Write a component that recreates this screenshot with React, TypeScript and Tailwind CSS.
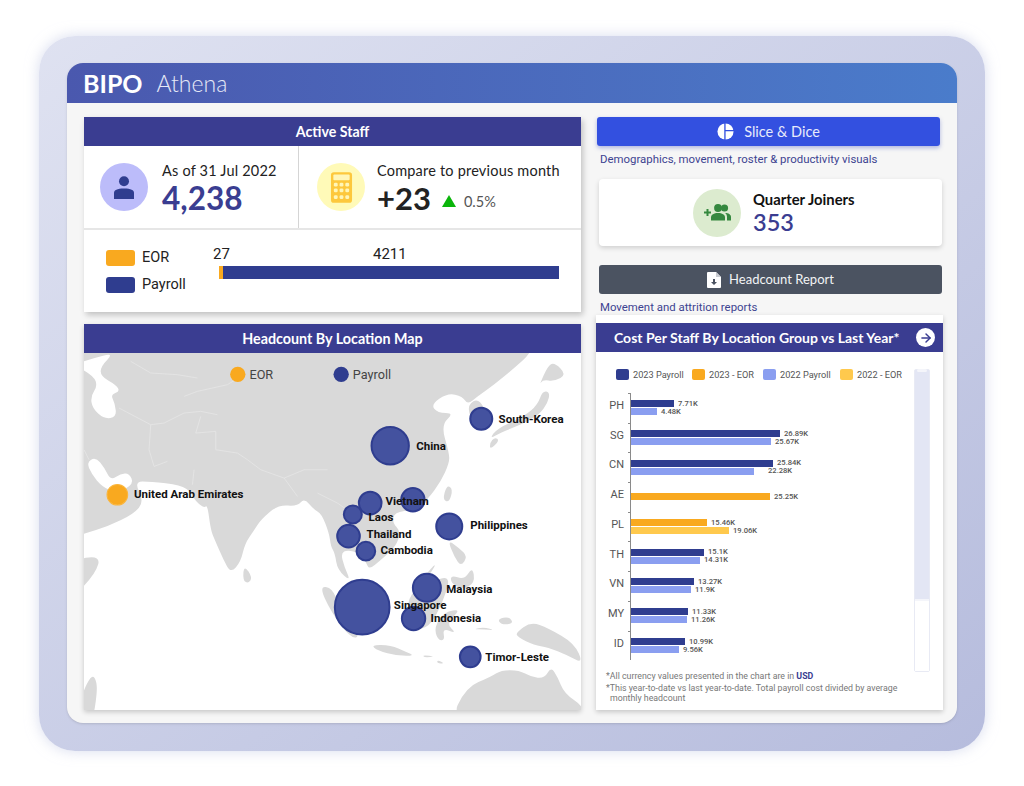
import { ArrowRight } from 'lucide-react';

const heading = "font-['Lato',sans-serif]";
const roboto = "font-['Roboto',sans-serif]";

const legend = [
  { label: '2023 Payroll', color: 'bg-[#2f3d8f]', width: 'w-[76px]' },
  { label: '2023 - EOR', color: 'bg-[#f9a91f]', width: 'w-[71px]' },
  { label: '2022 Payroll', color: 'bg-[#8a9ef0]', width: 'w-[77px]' },
  { label: '2022 - EOR', color: 'bg-[#ffc94d]', width: 'w-[64px]' },
];

type Bar = { w: number; label: string; color: string; gap?: number };

const rows: { code: string; bars: Bar[] }[] = [
  { code: 'PH', bars: [{ w: 43, label: '7.71K', color: 'bg-[#2f3d8f]' }, { w: 26, label: '4.48K', color: 'bg-[#8a9ef0]' }] },
  { code: 'SG', bars: [{ w: 149, label: '26.89K', color: 'bg-[#2f3d8f]' }, { w: 140, label: '25.67K', color: 'bg-[#8a9ef0]' }] },
  { code: 'CN', bars: [{ w: 142, label: '25.84K', color: 'bg-[#2f3d8f]' }, { w: 123, label: '22.28K', color: 'bg-[#8a9ef0]', gap: 14 }] },
  { code: 'AE', bars: [{ w: 139, label: '25.25K', color: 'bg-[#f9a91f]' }] },
  { code: 'PL', bars: [{ w: 76, label: '15.46K', color: 'bg-[#f9a91f]' }, { w: 98, label: '19.06K', color: 'bg-[#ffc94d]' }] },
  { code: 'TH', bars: [{ w: 73, label: '15.1K', color: 'bg-[#2f3d8f]' }, { w: 69, label: '14.31K', color: 'bg-[#8a9ef0]' }] },
  { code: 'VN', bars: [{ w: 63, label: '13.27K', color: 'bg-[#2f3d8f]' }, { w: 60, label: '11.9K', color: 'bg-[#8a9ef0]' }] },
  { code: 'MY', bars: [{ w: 57, label: '11.33K', color: 'bg-[#2f3d8f]' }, { w: 56, label: '11.26K', color: 'bg-[#8a9ef0]' }] },
  { code: 'ID', bars: [{ w: 54, label: '10.99K', color: 'bg-[#2f3d8f]' }, { w: 48, label: '9.56K', color: 'bg-[#8a9ef0]' }] },
];

const bubbles = [
  { x: 1203, y: 205, r: 36 },
  { x: 930, y: 286, r: 59 },
  { x: 998, y: 448, r: 38 },
  { x: 870, y: 458, r: 37 },
  { x: 818, y: 492, r: 30 },
  { x: 1107, y: 528, r: 42 },
  { x: 805, y: 557, r: 37 },
  { x: 857, y: 602, r: 31 },
  { x: 1040, y: 712, r: 45 },
  { x: 1000, y: 804, r: 38 },
  { x: 846, y: 770, r: 85 },
  { x: 1170, y: 919, r: 34 },
];

const labels = [
  { x: 1255, y: 217, t: 'South-Korea' },
  { x: 1008, y: 299, t: 'China' },
  { x: 162, y: 443, t: 'United Arab Emirates' },
  { x: 916, y: 465, t: 'Vietnam' },
  { x: 865, y: 511, t: 'Laos' },
  { x: 1170, y: 537, t: 'Philippines' },
  { x: 859, y: 562, t: 'Thailand' },
  { x: 901, y: 612, t: 'Cambodia' },
  { x: 1098, y: 727, t: 'Malaysia' },
  { x: 941, y: 776, t: 'Singapore' },
  { x: 1051, y: 814, t: 'Indonesia' },
  { x: 1215, y: 930, t: 'Timor-Leste' },
];

// land outlines in map coordinates (3 units = 1px), from top-left of the map
const land: number[][][] = [
  // eurasia + arabia
  [[-40,40],[-40,-40],[40,-40],[1300,-40],[1345,-40],[1340,0],[1290,45],[1230,95],[1180,130],[1150,155],[1135,130],[1090,120],[1040,155],[1060,180],[1110,180],[1070,215],[1095,300],[1095,330],[1070,385],[1030,440],[990,470],[930,478],[925,510],[950,535],[935,580],[890,620],[855,650],[845,625],[825,600],[790,590],[770,600],[780,640],[800,685],[760,650],[752,600],[740,580],[735,540],[712,482],[690,470],[660,435],[640,460],[582,455],[530,500],[510,531],[482,572],[470,626],[440,660],[418,620],[392,560],[380,531],[370,455],[360,465],[330,440],[322,418],[290,396],[200,385],[150,385],[180,445],[150,482],[72,520],[0,542],[-40,552],[-40,500]],
  // korea
  [[1150,155],[1160,200],[1190,235],[1215,200],[1185,135]],
  // japan
  [[1218,290],[1246,262],[1232,252],[1216,270]],
  [[1215,258],[1250,238],[1310,215],[1365,185],[1390,150],[1397,118],[1375,113],[1360,155],[1320,190],[1240,225]],
  [[1365,97],[1390,40],[1410,28],[1447,65],[1410,85],[1375,80]],
  // taiwan
  [[1075,440],[1088,395],[1106,408],[1095,448]],
  // philippines
  [[1090,560],[1125,585],[1150,610],[1130,640],[1110,610]],
  [[1100,665],[1140,680],[1165,640],[1172,690],[1135,708],[1100,690]],
  [[1020,668],[1060,625],[1032,672]],
  // sri lanka
  [[480,636],[505,672],[492,692],[476,680]],
  // sumatra
  [[705,698],[745,705],[765,760],[830,850],[800,856],[740,775]],
  // java
  [[860,875],[920,876],[965,896],[992,908],[940,908],[880,892]],
  [[1015,905],[1055,910],[1020,913]],
  [[1060,920],[1082,932],[1058,930]],
  // borneo
  [[965,750],[1000,700],[1050,680],[1100,670],[1075,750],[1035,822],[985,832]],
  // sulawesi
  [[1050,822],[1060,860],[1082,862],[1075,825],[1118,842],[1085,810],[1132,768],[1080,776]],
  [[1165,828],[1200,822],[1232,832],[1200,828]],
  // papua
  [[1240,797],[1275,790],[1288,812],[1250,814]],
  [[1295,838],[1340,806],[1392,825],[1470,870],[1497,932],[1450,906],[1390,882],[1350,876],[1300,852]],
  // australia
  [[1095,1110],[1145,1002],[1220,971],[1250,951],[1305,951],[1340,971],[1380,976],[1400,941],[1420,971],[1440,1021],[1500,1061],[1500,1110]],
  // somalia
  [[-40,622],[50,606],[35,661],[-40,740]],
  // madagascar
  [[-30,1110],[-5,1020],[22,965],[36,978],[40,1015],[25,1110]],
];

// closed path through the midpoints, so the coast doesn't look cut with a ruler
function smooth(points: number[][]) {
  const mid = (a: number[], b: number[]) => `${(a[0] + b[0]) / 2} ${(a[1] + b[1]) / 2}`;
  let d = `M${mid(points[points.length - 1], points[0])}`;
  points.forEach((p, i) => {
    d += ` Q${p[0]} ${p[1]} ${mid(p, points[(i + 1) % points.length])}`;
  });
  return d + ' Z';
}

const borders = [
  'M140 25 L200 60 L280 65 L340 75',
  'M105 165 L200 215 L240 210 L300 180 L350 175 L400 185',
  'M200 215 L195 290 L210 340 L250 325',
  'M350 190 L335 240 L395 235 L395 290 L460 300 L490 320 L530 350 L600 375 L660 350 L730 350',
  'M300 130 L340 115 L430 95 L470 70',
  'M0 290 L15 320 M330 350 L325 395 M640 430 L600 375',
  'M700 420 L760 450 L830 500',
];

function Staff() {
  return (
    <svg viewBox="0 0 20 23" className="w-[20px] h-[23px]">
      <circle cx="10" cy="5.2" r="5" fill="#2f3d8f" />
      <path d="M0 23 V17 C0 14 3 12.5 10 12.5 C17 12.5 20 14 20 17 V23 Z" fill="#2f3d8f" />
    </svg>
  );
}

function Calculator() {
  return (
    <svg viewBox="0 0 24 34" className="w-[23px] h-[33px]">
      <rect x="1" y="1" width="22" height="32" rx="3" fill="#fdc83d" />
      <rect x="3.5" y="3.5" width="17" height="6" rx="1" fill="#fff6b8" />
      {[6, 12, 18].map((cx) =>
        [14, 20, 27].map((cy) => <rect key={`${cx}-${cy}`} x={cx - 2} y={cy - 2} width="4" height="4" rx="1.4" fill="#fff6b8" />),
      )}
    </svg>
  );
}

function Pie() {
  return (
    <svg viewBox="0 0 18 18" className="w-[17px] h-[17px]">
      <circle cx="9" cy="9" r="8.5" fill="#fff" />
      <path d="M8.4 0 V18 M8.4 8 H18" stroke="#3350e0" strokeWidth="1.4" fill="none" />
    </svg>
  );
}

function FileDown() {
  return (
    <svg viewBox="0 0 14 16" className="w-[14px] h-[16px]">
      <path d="M1 0 H9 L14 5 V15 a1 1 0 0 1 -1 1 H1 a1 1 0 0 1 -1 -1 V1 a1 1 0 0 1 1 -1 Z" fill="#fff" />
      <path d="M9 0 V5 H14 Z" fill="#c9ccd2" />
      <path d="M6 7 H8 V10 H10 L7 13 L4 10 H6 Z" fill="#4b5361" />
    </svg>
  );
}

function Joiners() {
  return (
    <svg viewBox="0 0 27 17" className="w-[27px] h-[17px]" fill="#35883f">
      <path d="M0 7.5 H7 V9.5 H0 Z M2.5 5 H4.5 V12 H2.5 Z" />
      <circle cx="20.5" cy="4" r="3.6" />
      <path d="M21 9 C24.5 9 27 10.5 27 13 V16.5 H23 V13 C23 11.5 22.5 10 21 9 Z" />
      <circle cx="14" cy="4" r="3.9" />
      <path d="M7 16.5 V13.5 C7 10.5 10 9 14 9 C18 9 21 10.5 21 13.5 V16.5 Z" />
    </svg>
  );
}

function MapChart() {
  return (
    <svg viewBox="0 0 1490 1071" className="w-full h-full block">
      {land.map((points) => (
        <path key={points.join()} d={smooth(points)} fill="#d9d9d9" />
      ))}
      {/* caspian and gulf */}
      <path d={smooth([[-30,35],[30,15],[90,0],[50,40],[50,70],[95,95],[108,115],[80,125],[92,150],[98,192],[60,198],[25,165],[20,130],[40,100],[30,70]])} fill="#fff" />
      <path d={smooth([[8,328],[35,312],[62,345],[80,382],[110,362],[135,360],[150,392],[100,420],[55,402],[22,362]])} fill="#fff" />
      {borders.map((d) => (
        <path key={d} d={d} fill="none" stroke="#e9e9e9" strokeWidth="2" />
      ))}
      <g transform="translate(-12 -8)">
        <circle cx="473" cy="72" r="23" fill="#f9a91f" />
        <circle cx="783" cy="72" r="23" fill="#2f3d8f" />
        <text x="508" y="86" fontSize="38" fill="#444" fontFamily="Roboto, sans-serif">EOR</text>
        <text x="818" y="86" fontSize="38" fill="#444" fontFamily="Roboto, sans-serif">Payroll</text>
        <circle cx="112" cy="433" r="31" fill="#f9a91f" stroke="#fbb53a" strokeWidth="3" />
        {bubbles.map((b) => (
          <circle key={`${b.x}-${b.y}`} cx={b.x} cy={b.y} r={b.r - 3} fill="#44529f" stroke="#2f3d8f" strokeWidth="6" />
        ))}
        {labels.map((l) => (
          <text key={l.t} x={l.x} y={l.y} fontSize="34.5" fontWeight="700" fill="#111" fontFamily="Roboto, sans-serif">
            {l.t}
          </text>
        ))}
      </g>
    </svg>
  );
}

export default function App() {
  return (
    <div className="w-[1024px] h-[786px] bg-white pt-[36px] pl-[39px] overflow-hidden">
      <div className="w-[946px] h-[715px] rounded-[36px] bg-gradient-to-br from-[#dfe2f1] to-[#b6bcdd] shadow-[0_0_14px_rgba(190,196,226,0.6)] pt-[27px] pl-[28px]">
        <div className={`w-[890px] h-[660px] rounded-[16px] bg-[#f6f6f6] overflow-hidden flex flex-col shadow-sm ${heading}`}>
          {/* Header */}
          <div className="h-[40px] shrink-0 bg-gradient-to-r from-[#4a58ae] to-[#4a7ccb] flex items-center pl-[16px] text-white">
            <span className="text-[25px] font-bold leading-none">BIPO</span>
            <span className="text-[23px] leading-none font-light ml-[14px] text-[#e6e9f7]">Athena</span>
          </div>

          <div className="flex-1 flex pl-[17px] pt-[14px] pb-[13px]">
            {/* Left column */}
            <div className="w-[497px] flex flex-col gap-[12px]">
              {/* Active Staff */}
              <div className="h-[195px] bg-white shadow-[2px_3px_6px_rgba(0,0,0,0.22)] flex flex-col">
                <div className="h-[29px] bg-[#3a3d91] text-white text-[14.2px] font-bold flex items-center justify-center">Active Staff</div>
                <div className="h-[84px] flex border-b-2 border-[#e6e6e6]">
                  <div className="w-[215px] border-r border-[#d5d5d5] flex items-center pl-[16px] gap-[14px]">
                    <div className="w-[48px] h-[48px] rounded-full bg-[#bcbcfa] flex items-center justify-center">
                      <Staff />
                    </div>
                    <div className="flex flex-col pt-[1px]">
                      <span className="text-[14.5px] leading-[20px] text-[#222] tracking-[0.2px]">As of 31 Jul 2022</span>
                      <span className="text-[31.5px] leading-[34px] font-bold text-[#3a3d91]">4,238</span>
                    </div>
                  </div>
                  <div className="flex-1 flex items-center pl-[18px] gap-[12px]">
                    <div className="w-[48px] h-[48px] rounded-full bg-[#fffab8] flex items-center justify-center">
                      <Calculator />
                    </div>
                    <div className="flex flex-col pt-[1px]">
                      <span className="text-[14.5px] leading-[20px] text-[#222] tracking-[0.2px]">Compare to previous month</span>
                      <div className="flex items-center">
                        <span className="text-[31px] leading-[34px] font-bold text-[#222]">+23</span>
                        <span className="ml-[11px] mt-[7px] w-0 h-0 border-l-[7.5px] border-r-[7.5px] border-b-[12px] border-l-transparent border-r-transparent border-b-[#0bb50b]" />
                        <span className="ml-[8px] mt-[9px] text-[14.5px] leading-none text-[#555]">0.5%</span>
                      </div>
                    </div>
                  </div>
                </div>
                <div className={`flex-1 flex pl-[22px] pt-[20px] ${roboto}`}>
                  <div className="w-[107px] flex flex-col gap-[11px] text-[14.5px] text-[#222]">
                    <div className="flex items-center gap-[7px] h-[16px]">
                      <span className="w-[29px] h-[16px] rounded-[3px] bg-[#f9a91f]" />
                      EOR
                    </div>
                    <div className="flex items-center gap-[7px] h-[16px]">
                      <span className="w-[29px] h-[16px] rounded-[3px] bg-[#2f3d8f]" />
                      Payroll
                    </div>
                  </div>
                  <div className="flex flex-col w-[346px] -mt-[5px]">
                    <div className="flex text-[15px] leading-[18px] text-[#222] h-[18px]">
                      <span className="w-[160px]">27</span>
                      <span>4211</span>
                    </div>
                    <div className="flex h-[13px] mt-[3px] ml-[6px] w-[340px]">
                      <span className="w-[4px] bg-[#f9a91f]" />
                      <span className="flex-1 bg-[#2f3d8f]" />
                    </div>
                  </div>
                </div>
              </div>

              {/* Map */}
              <div className="flex-1 bg-white shadow-[0_2px_5px_rgba(0,0,0,0.2)] flex flex-col min-h-0">
                <div className="h-[29px] shrink-0 bg-[#3a3d91] text-white text-[14.3px] font-bold flex items-center justify-center">Headcount By Location Map</div>
                <div className="flex-1 min-h-0">
                  <MapChart />
                </div>
              </div>
            </div>

            {/* Right column */}
            <div className="w-[347px] ml-[15px] flex flex-col">
              <div className="ml-[1px] w-[343px] h-[29px] rounded-[3px] bg-[#3350e0] shadow-[0_2px_4px_rgba(40,60,180,0.35)] flex items-center justify-center gap-[10px] text-[#e8ebfb] text-[14.5px]">
                <Pie />
                Slice &amp; Dice
              </div>
              <p className={`ml-[4px] mt-[6px] h-[14px] text-[11.4px] leading-[14px] text-[#3d4391] ${roboto}`}>Demographics, movement, roster &amp; productivity visuals</p>

              <div className="ml-[3px] mt-[13px] w-[343px] h-[67px] rounded-[4px] bg-white shadow-[0_2px_5px_rgba(0,0,0,0.16)] flex items-center pl-[94px] gap-[12px]">
                <div className="w-[48px] h-[48px] rounded-full bg-[#dcebcf] flex items-center justify-center">
                  <Joiners />
                </div>
                <div className="flex flex-col">
                  <span className="text-[14.8px] leading-[19px] font-bold text-[#111]">Quarter Joiners</span>
                  <span className="text-[23.5px] leading-[27px] font-semibold text-[#3a3d91]">353</span>
                </div>
              </div>

              <div className="ml-[3px] mt-[19px] w-[343px] h-[29px] rounded-[3px] bg-[#4b5361] flex items-center justify-center gap-[8px] text-[#f2f3f5] text-[13px]">
                <FileDown />
                Headcount Report
              </div>
              <p className={`ml-[4px] mt-[6px] h-[14px] text-[11.4px] leading-[14px] text-[#3d4391] ${roboto}`}>Movement and attrition reports</p>

              {/* Cost per staff */}
              <div className="mt-[1px] flex-1 min-h-0 bg-white pt-[8px] shadow-[0_2px_5px_rgba(0,0,0,0.2)] flex flex-col">
                <div className="h-[29px] shrink-0 bg-[#3a3d91] text-white text-[14px] font-bold flex items-center pl-[18px] pr-[8px] justify-between">
                  Cost Per Staff By Location Group vs Last Year*
                  <span className="w-[19px] h-[19px] rounded-full bg-white flex items-center justify-center">
                    <ArrowRight className="w-[14px] h-[14px] text-[#3a3d91]" strokeWidth={2.5} />
                  </span>
                </div>

                <div className={`flex-1 min-h-0 flex flex-col ${roboto}`}>
                  <div className="flex pt-[17px] h-[320px] shrink-0">
                    <div className="w-[318px] pl-[20px]">
                      <div className="flex h-[11px] items-center">
                        {legend.map((item) => (
                          <div key={item.label} className={`flex items-center gap-[4px] text-[9.2px] text-[#555] whitespace-nowrap ${item.width}`}>
                            <span className={`w-[13px] h-[11px] rounded-[2px] shrink-0 ${item.color}`} />
                            {item.label}
                          </div>
                        ))}
                      </div>
                      <div className="-ml-[20px] mt-[13px] flex">
                        <div className="w-[34px] flex flex-col">
                          {rows.map((row) => (
                            <div key={row.code} className="h-[29.7px] flex items-center justify-end pr-[6px] pb-[3px] text-[11px] text-[#555]">
                              {row.code}
                            </div>
                          ))}
                        </div>
                        <div className="border-l-[1.5px] border-[#8a8a8a] flex flex-col">
                          {rows.map((row) => (
                            <div key={row.code} className="relative h-[29.7px] flex flex-col justify-center gap-[1px]">
                              <span className="absolute -left-[3px] top-0 w-[2px] h-[1px] bg-[#8a8a8a]" />
                              {row.bars.map((bar) => (
                                <div key={bar.label} className="flex items-center h-[7px]">
                                  <div className={`h-[7px] ${bar.color}`} style={{ width: bar.w }} />
                                  <span className="text-[7.6px] leading-none font-medium text-[#555] whitespace-nowrap" style={{ marginLeft: bar.gap ?? 4 }}>
                                    {bar.label}
                                  </span>
                                </div>
                              ))}
                            </div>
                          ))}
                        </div>
                      </div>
                    </div>
                    {/* range slider */}
                    <div className="relative w-[16px] h-[303px] flex flex-col rounded-[2px] border border-[#e8eaf4]">
                      <span className="absolute -top-[1px] left-[2px] right-[2px] h-[3px] rounded-full bg-[#f4f5fa]" />
                      <div className="h-[231px] bg-[#e3e6f4] border-b-2 border-[#f4f5fa]" />
                      <div className="flex-1 bg-white" />
                    </div>
                  </div>
                  <div className="pl-[10px] pr-[32px] text-[8.8px] leading-[10.6px] text-[#777] -mt-[1px]">
                    <p>
                      *All currency values presented in the chart are in <span className="font-bold text-[#3a3d91]">USD</span>
                    </p>
                    <p className="mt-[1px]">*This year-to-date vs last year-to-date. Total payroll cost divided by average</p>
                    <p className="pl-[4px]">monthly headcount</p>
                  </div>
                </div>
              </div>
            </div>
          </div>
        </div>
      </div>
    </div>
  );
}
